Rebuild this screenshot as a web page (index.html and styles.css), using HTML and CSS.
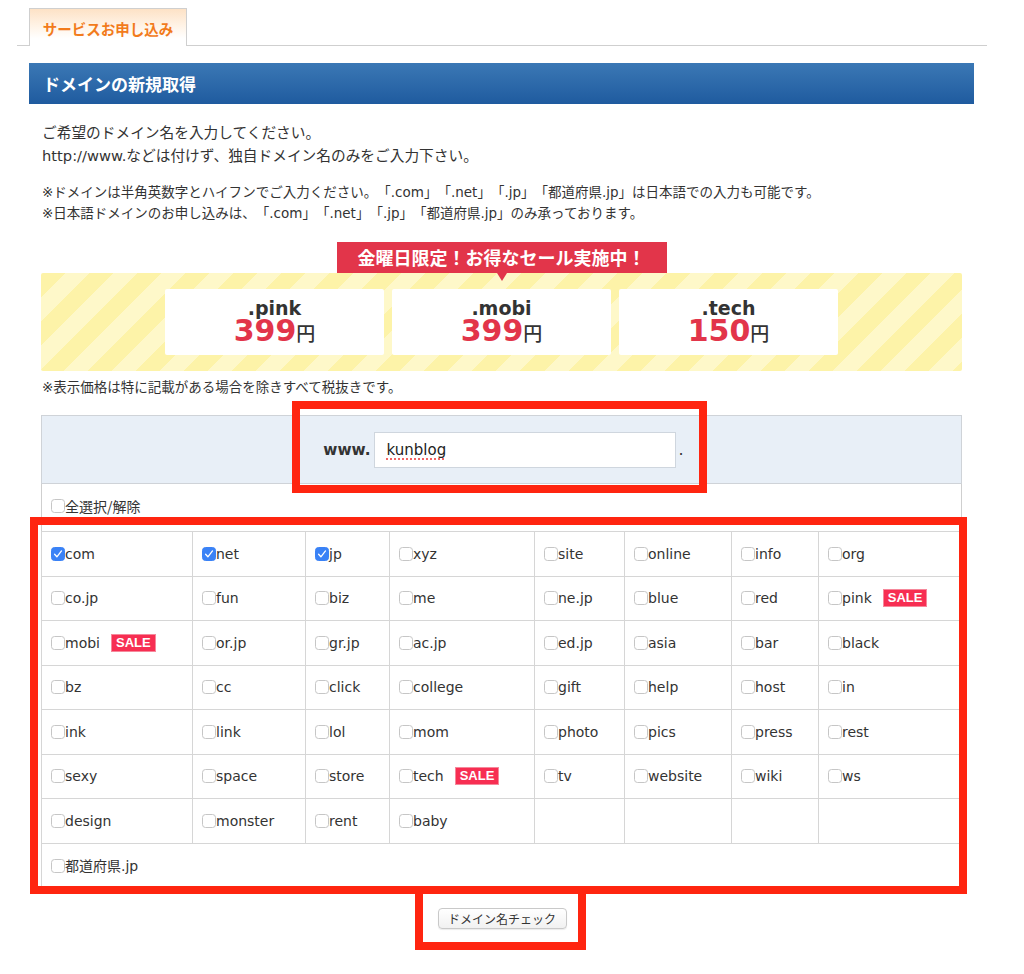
FILE: index.html
```html
<!DOCTYPE html>
<html lang="ja">
<head>
<meta charset="utf-8">
<title>ドメインの新規取得</title>
<link rel="stylesheet" href="styles.css">
</head>
<body>
<div class="page">
  <div class="tabs">
    <div class="tab">サービスお申し込み</div>
  </div>
  <div class="content">
    <h2 class="title">ドメインの新規取得</h2>
    <div class="body">
      <p class="lead">ご希望のドメイン名を入力してください。<br>http://www.などは付けず、独自ドメイン名のみをご入力下さい。</p>
      <p class="note">※ドメインは半角英数字とハイフンでご入力ください。「.com」「.net」「.jp」「都道府県.jp」は日本語での入力も可能です。<br>※日本語ドメインのお申し込みは、「.com」「.net」「.jp」「都道府県.jp」のみ承っております。</p>
      <div class="sale">
        <div class="sale-label">金曜日限定！お得なセール実施中！</div>
        <div class="sale-box">
          <div class="card"><div class="card-name">.pink</div><div class="card-price"><span class="num">399</span><span class="yen">円</span></div></div>
          <div class="card"><div class="card-name">.mobi</div><div class="card-price"><span class="num">399</span><span class="yen">円</span></div></div>
          <div class="card"><div class="card-name">.tech</div><div class="card-price"><span class="num">150</span><span class="yen">円</span></div></div>
        </div>
      </div>
      <p class="note note-tax">※表示価格は特に記載がある場合を除きすべて税抜きです。</p>
      <div class="form">
        <div class="www-row">
          <span class="www">www.</span>
          <span class="input"><span class="typed">kunblog</span></span>
          <span class="dot">.</span>
        </div>
        <div class="all-row"><span class="cb"></span>全選択/解除</div>
        <table class="tld">
          <colgroup>
            <col class="c1"><col class="c2"><col class="c3"><col class="c4"><col class="c5"><col class="c6"><col class="c7"><col class="c8">
          </colgroup>
          <tr>
            <td><span class="cb on"><svg viewBox="0 0 14 14"><path d="M3.6 7.3 L5.9 9.8 L10.5 3.9" fill="none" stroke="#fff" stroke-width="1.3" stroke-linecap="round" stroke-linejoin="round"/></svg></span>com</td>
            <td><span class="cb on"><svg viewBox="0 0 14 14"><path d="M3.6 7.3 L5.9 9.8 L10.5 3.9" fill="none" stroke="#fff" stroke-width="1.3" stroke-linecap="round" stroke-linejoin="round"/></svg></span>net</td>
            <td><span class="cb on"><svg viewBox="0 0 14 14"><path d="M3.6 7.3 L5.9 9.8 L10.5 3.9" fill="none" stroke="#fff" stroke-width="1.3" stroke-linecap="round" stroke-linejoin="round"/></svg></span>jp</td>
            <td><span class="cb"></span>xyz</td>
            <td><span class="cb"></span>site</td>
            <td><span class="cb"></span>online</td>
            <td><span class="cb"></span>info</td>
            <td><span class="cb"></span>org</td>
          </tr>
          <tr>
            <td><span class="cb"></span>co.jp</td>
            <td><span class="cb"></span>fun</td>
            <td><span class="cb"></span>biz</td>
            <td><span class="cb"></span>me</td>
            <td><span class="cb"></span>ne.jp</td>
            <td><span class="cb"></span>blue</td>
            <td><span class="cb"></span>red</td>
            <td><span class="cb"></span>pink<span class="badge">SALE</span></td>
          </tr>
          <tr>
            <td><span class="cb"></span>mobi<span class="badge">SALE</span></td>
            <td><span class="cb"></span>or.jp</td>
            <td><span class="cb"></span>gr.jp</td>
            <td><span class="cb"></span>ac.jp</td>
            <td><span class="cb"></span>ed.jp</td>
            <td><span class="cb"></span>asia</td>
            <td><span class="cb"></span>bar</td>
            <td><span class="cb"></span>black</td>
          </tr>
          <tr>
            <td><span class="cb"></span>bz</td>
            <td><span class="cb"></span>cc</td>
            <td><span class="cb"></span>click</td>
            <td><span class="cb"></span>college</td>
            <td><span class="cb"></span>gift</td>
            <td><span class="cb"></span>help</td>
            <td><span class="cb"></span>host</td>
            <td><span class="cb"></span>in</td>
          </tr>
          <tr>
            <td><span class="cb"></span>ink</td>
            <td><span class="cb"></span>link</td>
            <td><span class="cb"></span>lol</td>
            <td><span class="cb"></span>mom</td>
            <td><span class="cb"></span>photo</td>
            <td><span class="cb"></span>pics</td>
            <td><span class="cb"></span>press</td>
            <td><span class="cb"></span>rest</td>
          </tr>
          <tr>
            <td><span class="cb"></span>sexy</td>
            <td><span class="cb"></span>space</td>
            <td><span class="cb"></span>store</td>
            <td><span class="cb"></span>tech<span class="badge">SALE</span></td>
            <td><span class="cb"></span>tv</td>
            <td><span class="cb"></span>website</td>
            <td><span class="cb"></span>wiki</td>
            <td><span class="cb"></span>ws</td>
          </tr>
          <tr>
            <td><span class="cb"></span>design</td>
            <td><span class="cb"></span>monster</td>
            <td><span class="cb"></span>rent</td>
            <td><span class="cb"></span>baby</td>
            <td></td><td></td><td></td><td></td>
          </tr>
          <tr>
            <td colspan="8"><span class="cb"></span>都道府県.jp</td>
          </tr>
        </table>
      </div>
      <div class="btn-row"><button class="btn" type="button">ドメイン名チェック</button></div>
    </div>
  </div>
  <div class="mark mark-www"></div>
  <div class="mark mark-grid"></div>
  <div class="mark mark-btn"></div>
</div>
</body>
</html>
```

FILE: styles.css
```css
* { box-sizing: border-box; }
html, body { margin: 0; padding: 0; background: #fff; }
body {
  font-family: "DejaVu Sans", "Noto Sans CJK JP", sans-serif;
  color: #333;
  text-spacing-trim: space-all;
}
.page {
  position: relative;
  width: 1024px;
  height: 974px;
  padding-top: 8px;
  overflow: hidden;
}

/* tabs */
.tabs {
  margin-left: 17px;
  width: 970px;
  height: 38px;
  border-bottom: 1px solid #cfcfcf;
  padding-left: 12px;
  display: flex;
  align-items: flex-end;
}
.tab {
  width: 158px;
  height: 38px;
  margin-bottom: -1px;
  border: 1px solid #cfcfcf;
  border-bottom: none;
  background: linear-gradient(#fde2c6 0%, #fff3e6 45%, #ffffff 80%);
  color: #f27b1c;
  font-family: "Noto Sans CJK JP", sans-serif;
  font-weight: bold;
  font-size: 14.5px;
  display: flex;
  align-items: center;
  justify-content: center;
  padding-top: 1px;
}

/* header */
.content {
  margin: 17px 0 0 29px;
  width: 945px;
}
.title {
  margin: 0;
  height: 41px;
  background: linear-gradient(#3b78b5, #1f5b9f);
  color: #fff;
  font-family: "Noto Sans CJK JP", sans-serif;
  font-weight: bold;
  font-size: 17px;
  line-height: 41px;
  padding-left: 14px;
}
.body {
  padding: 0 12px;
}
.lead {
  margin: 17px 0 0 1px;
  font-size: 14.7px;
  line-height: 23px;
}
.note {
  margin: 15px 0 0 1px;
  font-size: 13.5px;
  line-height: 21px;
}

/* sale */
.sale { margin-top: 18px; }
.sale-label {
  position: relative;
  width: 330px;
  height: 31px;
  margin: 0 auto;
  background: #e2354a;
  color: #fff;
  font-family: "Noto Sans CJK JP", sans-serif;
  font-weight: bold;
  font-size: 18px;
  line-height: 31px;
  text-align: center;
}
.sale-label::after {
  content: "";
  position: absolute;
  left: 50%;
  bottom: -8px;
  margin-left: -5px;
  border-left: 5px solid transparent;
  border-right: 5px solid transparent;
  border-top: 8px solid #e2354a;
}
.sale-box {
  height: 98px;
  padding: 16px 0;
  display: flex;
  justify-content: center;
  gap: 8px;
  border-radius: 2px;
  background: repeating-linear-gradient(135deg, #fdf3a8 0 17px, #fef8c9 17px 34px);
}
.card {
  width: 219px;
  height: 66px;
  background: #fff;
  border-radius: 2px;
  display: flex;
  flex-direction: column;
  align-items: center;
  padding-top: 9px;
}
.card-name {
  font-weight: bold;
  font-size: 19px;
  line-height: 20px;
  color: #333;
}
.card-price {
  line-height: 28px;
  height: 28px;
  margin-top: -1px;
}
.num {
  font-weight: bold;
  font-size: 30px;
  color: #e2354a;
}
.yen {
  font-family: "Noto Sans CJK JP", sans-serif;
  font-size: 19px;
  color: #333;
  font-weight: 500;
}
.note-tax { margin-top: 6px; }

/* form */
.form { margin-top: 17px; }
.www-row {
  height: 69px;
  border: 1px solid #cfd3d8;
  background: #e8eff7;
  display: flex;
  align-items: center;
  justify-content: center;
  padding-left: 4px;
}
.www {
  font-weight: bold;
  font-size: 15.3px;
  color: #333;
  margin-right: 3px;
}
.input {
  width: 302px;
  height: 36px;
  background: #fff;
  border: 1px solid #cfd6de;
  display: flex;
  align-items: center;
  padding-left: 12px;
  font-size: 15px;
  color: #222;
}
.typed {
  text-decoration: underline dotted #e33;
  text-underline-offset: 4px;
}
.dot {
  font-size: 16px;
  margin-left: 3px;
}
.all-row {
  height: 47px;
  border-left: 1px solid #cfcfcf;
  border-right: 1px solid #cfcfcf;
  display: flex;
  align-items: center;
  padding-left: 9px;
  padding-bottom: 3px;
  font-size: 14px;
  font-family: "Noto Sans CJK JP", sans-serif;
}
.tld {
  width: 100%;
  border-collapse: collapse;
  table-layout: fixed;
}
.c1 { width: 151px; }
.c2 { width: 113px; }
.c3 { width: 84px; }
.c4 { width: 145px; }
.c5 { width: 90px; }
.c6 { width: 107px; }
.c7 { width: 87px; }
.tld td {
  border: 1px solid #d6d6d6;
  height: 44.5px;
  padding: 0 0 0 9px;
  font-size: 14px;
  white-space: nowrap;
  vertical-align: middle;
  color: #333;
}
.cb {
  display: inline-block;
  width: 14px;
  height: 14px;
  border: 1px solid #c6c6c6;
  border-radius: 3.5px;
  background: #fff;
  vertical-align: -2px;
  margin-right: 0;
}
.cb.on {
  background: #3a82f6;
  border-color: #3a82f6;
}
.cb svg {
  display: block;
  width: 14px;
  height: 14px;
  margin: -1px;
}
.badge {
  display: inline-block;
  margin-left: 11px;
  height: 18px;
  line-height: 16px;
  padding: 0 4px;
  background: #f72e52;
  border: 1px solid #f6889b;
  color: #fff;
  font-family: "Liberation Sans", Arial, sans-serif;
  font-weight: bold;
  font-size: 13px;
  vertical-align: 1px;
}
.btn-row {
  margin-top: 20px;
  display: flex;
  justify-content: center;
}
.btn {
  width: 129px;
  height: 21px;
  padding: 0;
  border: 1px solid #c9c9c9;
  border-radius: 4px;
  background: linear-gradient(#ffffff, #f1f1f1);
  box-shadow: 0 1px 1px rgba(0,0,0,0.08);
  font-family: "Noto Sans CJK JP", sans-serif;
  font-size: 12px;
  color: #333;
  margin-left: 1px;
}

/* red annotation boxes drawn over the screenshot */
.mark {
  position: absolute;
  border: 8px solid #ff2510;
}
.mark-www { left: 292px; top: 401px; width: 415px; height: 92px; }
.mark-grid { left: 30px; top: 517px; width: 937px; height: 377px; }
.mark-btn { left: 415px; top: 886px; width: 171px; height: 64px; border-top: none; }
```
